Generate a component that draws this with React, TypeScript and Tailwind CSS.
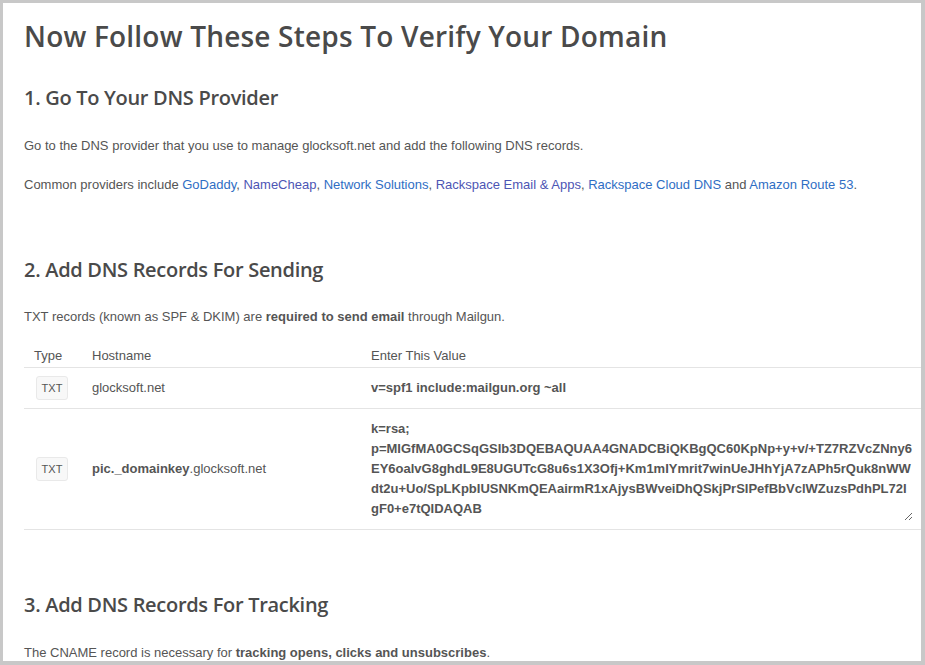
import React from "react";

const dkim = [
  "k=rsa;",
  "p=MIGfMA0GCSqGSIb3DQEBAQUAA4GNADCBiQKBgQC60KpNp+y+v/+TZ7RZVcZNny6",
  "EY6oalvG8ghdL9E8UGUTcG8u6s1X3Ofj+Km1mIYmrit7winUeJHhYjA7zAPh5rQuk8nWW",
  "dt2u+Uo/SpLKpbIUSNKmQEAairmR1xAjysBWveiDhQSkjPrSIPefBbVclWZuzsPdhPL72I",
  "gF0+e7tQIDAQAB",
].join("\n");

function TypeBadge() {
  return (
    <span className="ml-[2px] inline-flex h-[24px] w-[32px] items-center justify-center rounded-[3px] border border-[#e9e9e9] bg-[#f8f8f8] text-[11px] text-[#555]">
      TXT
    </span>
  );
}

function Heading({ children, className = "" }: { children: React.ReactNode; className?: string }) {
  return (
    <h2
      className={`text-[20px] font-semibold leading-[30px] tracking-[-0.3px] text-[#4a4a4a] ${className}`}
      style={{ fontFamily: '"Open Sans", sans-serif' }}
    >
      {children}
    </h2>
  );
}

const linkBlue = "text-[#2f6ec4]";
const linkVisited = "text-[#4d55b4]";

export default function App() {
  return (
    <div
      className="h-[665px] w-[925px] overflow-hidden border-[3px] border-r-[4px] border-b-[4px] border-[#c8c8c8] bg-white text-[13px] leading-[20px] text-[#555]"
      style={{ fontFamily: '"Liberation Sans", Arial, sans-serif' }}
    >
      <div className="pl-[21px] pt-[13px]">
        <h1
          className="text-[28px] font-semibold leading-[40px] tracking-[0.2px] text-[#4a4a4a]"
          style={{ fontFamily: '"Open Sans", sans-serif' }}
        >
          Now Follow These Steps To Verify Your Domain
        </h1>

        <Heading className="mt-[27px]">1. Go To Your DNS Provider</Heading>
        <p className="mt-[23px]">
          Go to the DNS provider that you use to manage glocksoft.net and add the following DNS records.
        </p>
        <p className="mt-[19px]">
          Common providers include <a className={linkBlue}>GoDaddy</a>, <a className={linkVisited}>NameCheap</a>,{" "}
          <a className={linkBlue}>Network Solutions</a>, <a className={linkVisited}>Rackspace Email &amp; Apps</a>,{" "}
          <a className={linkBlue}>Rackspace Cloud DNS</a> and <a className={linkBlue}>Amazon Route 53</a>.
        </p>

        <Heading className="mt-[60px]">2. Add DNS Records For Sending</Heading>
        <p className="mt-[22px]">
          TXT records (known as SPF &amp; DKIM) are <b>required to send email</b> through Mailgun.
        </p>

        <table className="mt-[19px] w-[898px] border-collapse text-left">
          <thead>
            <tr className="border-b border-[#e4e4e4]">
              <th className="w-[58px] px-[10px] pb-[1px] font-normal">Type</th>
              <th className="w-[279px] pb-[1px] pl-[10px] font-normal">Hostname</th>
              <th className="pb-[1px] pl-[10px] font-normal">Enter This Value</th>
            </tr>
          </thead>
          <tbody>
            <tr className="border-b border-[#e4e4e4]">
              <td className="px-[10px] py-[8px] align-middle">
                <TypeBadge />
              </td>
              <td className="pl-[10px] align-middle">glocksoft.net</td>
              <td className="pl-[10px] align-middle font-bold">v=spf1 include:mailgun.org ~all</td>
            </tr>
            <tr className="border-b border-[#e4e4e4]">
              <td className="px-[10px] align-middle">
                <TypeBadge />
              </td>
              <td className="pl-[10px] align-middle">
                <b>pic._domainkey</b>.glocksoft.net
              </td>
              <td className="pb-[8px] pl-[8px] pt-[6px]">
                <textarea
                  readOnly
                  value={dkim}
                  className="block h-[106px] w-[544px] resize overflow-hidden whitespace-pre border-0 px-[2px] py-[4px] text-[13px] font-bold leading-[20px] text-[#555] outline-none"
                  style={{ fontFamily: '"Liberation Sans", Arial, sans-serif' }}
                />
              </td>
            </tr>
          </tbody>
        </table>

        <Heading className="mt-[60px]">3. Add DNS Records For Tracking</Heading>
        <p className="mt-[23px]">
          The CNAME record is necessary for <b>tracking opens, clicks and unsubscribes</b>.
        </p>
      </div>
    </div>
  );
}
